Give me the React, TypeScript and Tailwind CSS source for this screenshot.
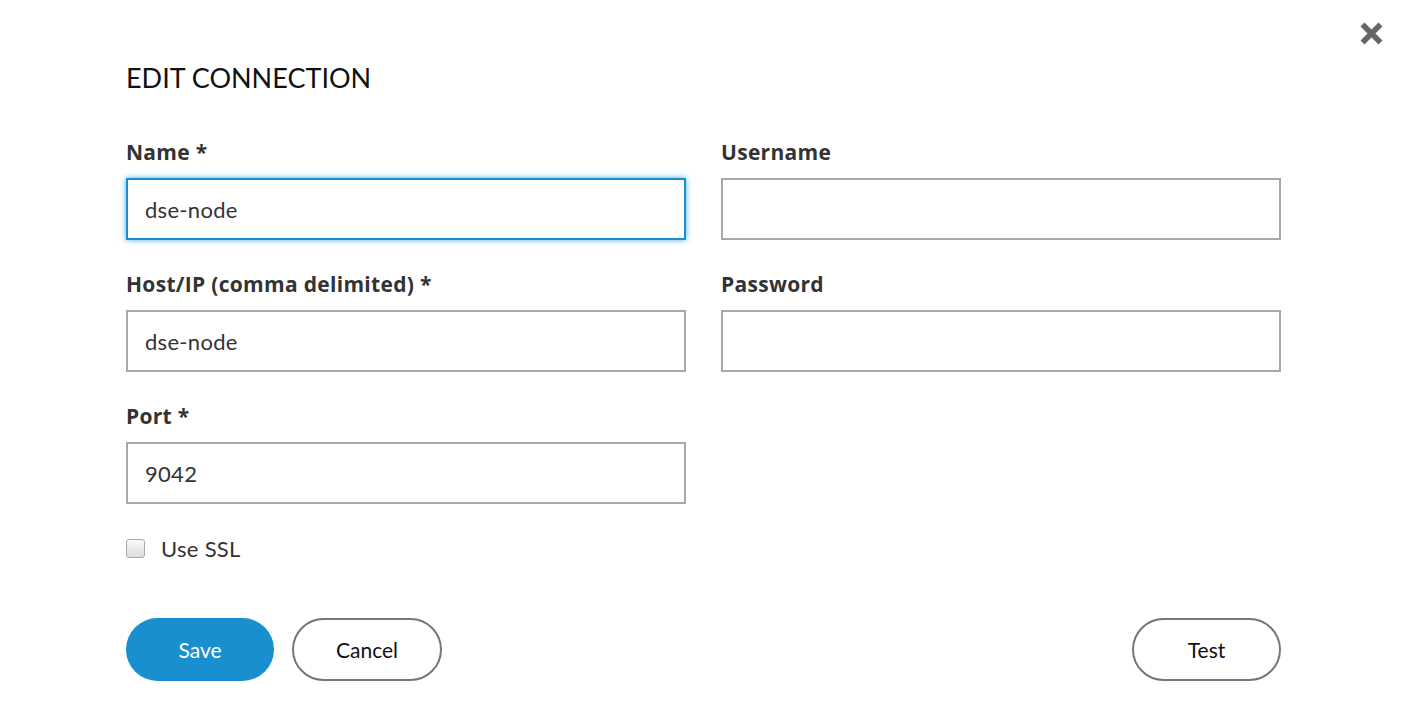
import { useState } from 'react'

function Field({ label, value, focused }: { label: string; value?: string; focused?: boolean }) {
  return (
    <div className="flex flex-col">
      <label className="h-[26px] text-[21px] leading-[26px] font-bold text-[#333] font-['Open_Sans',sans-serif] tracking-[0.3px]">
        {label}
      </label>
      <input
        defaultValue={value}
        className={
          focused
            ? 'mt-[13px] h-[62px] px-[17px] text-[22px] tracking-[0.3px] text-[#333] border-2 border-[#1a8fd0] shadow-[0_0_6px_#4fb0e8] outline-none'
            : 'mt-[13px] h-[62px] px-[17px] text-[22px] tracking-[0.3px] text-[#333] border-2 border-[#a8a8a8] outline-none'
        }
      />
    </div>
  )
}

export default function App() {
  const [ssl, setSsl] = useState(false)
  return (
    <div className="relative w-[1405px] h-[707px] bg-white font-['Lato',sans-serif]">
      <button className="absolute right-[20px] top-[20px] text-[#666]">
        <svg className="w-[27px] h-[27px]" viewBox="0 0 24 24">
          <path d="M4 4L20 20M20 4L4 20" stroke="currentColor" strokeWidth={5} strokeLinecap="butt" />
        </svg>
      </button>
      <div className="px-[126px] pt-[61px]">
        <h2 className="text-[27px] leading-[34px] text-[#111]">EDIT CONNECTION</h2>
        <div className="mt-[44px] grid grid-cols-[560px_560px] gap-x-[35px] gap-y-[31px]">
          <Field label="Name *" value="dse-node" focused />
          <Field label="Username" />
          <Field label="Host/IP (comma delimited) *" value="dse-node" />
          <Field label="Password" />
          <Field label="Port *" value="9042" />
        </div>
        <label className="mt-[31px] flex items-center gap-[16px] text-[22px] tracking-[0.3px] text-[#333] h-[26px]">
          <input
            type="checkbox"
            checked={ssl}
            onChange={() => setSsl(!ssl)}
            className="appearance-none w-[19px] h-[19px] rounded-[3px] border border-[#aaa] bg-gradient-to-b from-[#fafafa] to-[#dcdcdc]"
          />
          Use SSL
        </label>
        <div className="mt-[57px] flex items-center w-[1155px]">
          <button className="w-[148px] h-[63px] rounded-full bg-[#1a8fd0] text-white text-[21px]">Save</button>
          <button className="ml-[18px] w-[150px] h-[63px] rounded-full border-2 border-[#777] text-[#111] text-[21px]">Cancel</button>
          <button className="ml-auto w-[149px] h-[63px] rounded-full border-2 border-[#777] text-[#111] text-[21px]">Test</button>
        </div>
      </div>
    </div>
  )
}
